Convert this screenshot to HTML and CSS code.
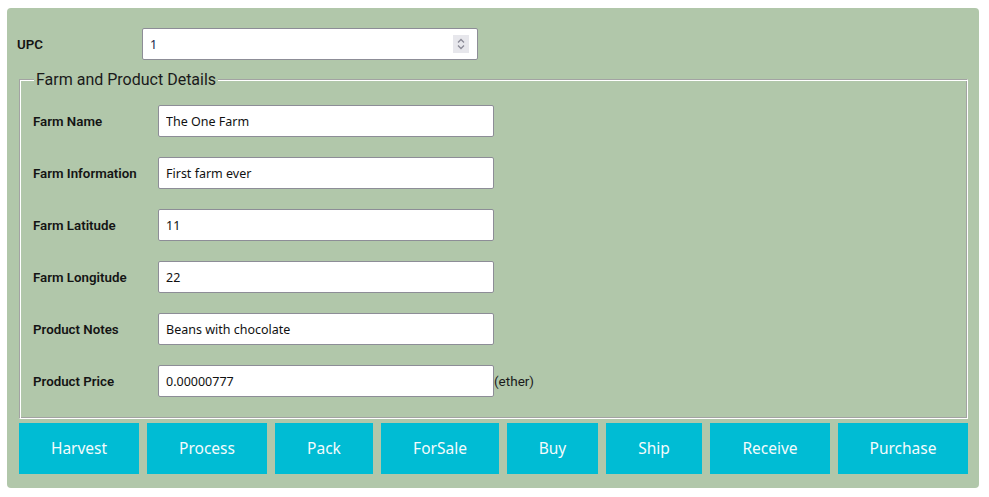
FILE: index.html
```
<!DOCTYPE html>
<html>
<head>
<meta charset="utf-8">
<link rel="stylesheet" href="styles.css">
</head>
<body>
<div class="panel">
  <div class="row upc-row">
    <label class="lbl">UPC</label>
    <div class="num-wrap">
      <input class="field upc" type="text" value="1">
      <span class="spin">
        <svg width="16" height="18" viewBox="0 0 16 18"><path d="M5 7.5 L8 4.5 L11 7.5" fill="none" stroke="#8a8a96" stroke-width="1.3"/><path d="M5 10.5 L8 13.5 L11 10.5" fill="none" stroke="#8a8a96" stroke-width="1.3"/></svg>
      </span>
    </div>
  </div>
  <fieldset class="details">
    <legend>Farm and Product Details</legend>
    <div class="row"><label class="lbl">Farm Name</label><input class="field" type="text" value="The One Farm"></div>
    <div class="row"><label class="lbl">Farm Information</label><input class="field" type="text" value="First farm ever"></div>
    <div class="row"><label class="lbl">Farm Latitude</label><input class="field" type="text" value="11"></div>
    <div class="row"><label class="lbl">Farm Longitude</label><input class="field" type="text" value="22"></div>
    <div class="row"><label class="lbl">Product Notes</label><input class="field" type="text" value="Beans with chocolate"></div>
    <div class="row"><label class="lbl">Product Price</label><input class="field" type="text" value="0.00000777"><span class="unit">(ether)</span></div>
  </fieldset>
  <div class="actions">
    <button class="btn">Harvest</button>
    <button class="btn">Process</button>
    <button class="btn">Pack</button>
    <button class="btn">ForSale</button>
    <button class="btn">Buy</button>
    <button class="btn">Ship</button>
    <button class="btn">Receive</button>
    <button class="btn">Purchase</button>
  </div>
</div>
</body>
</html>
```
FILE: styles.css
```
html, body {
  margin: 0;
  padding: 0;
  background: #ffffff;
}
body {
  font-family: Roboto, "Liberation Sans", sans-serif;
}
.panel {
  margin: 8px 10px 0 7px;
  width: 972px;
  height: 480px;
  box-sizing: border-box;
  background: #b1c7aa;
  border-radius: 4px;
  padding: 20px 11px 0 10px;
}
.row {
  display: flex;
  align-items: center;
  height: 32px;
  margin-bottom: 20px;
}
.row:last-child {
  margin-bottom: 0;
}
.upc-row {
  margin-bottom: 0;
}
.lbl {
  width: 125px;
  flex: none;
  font-size: 13.3px;
  font-weight: 600;
  color: #141414;
}
.num-wrap {
  position: relative;
  width: 336px;
  height: 32px;
}
.field {
  box-sizing: border-box;
  width: 336px;
  height: 32px;
  margin: 0;
  border: 1px solid #8d8d97;
  border-radius: 2px;
  background: #ffffff;
  padding: 0 7px;
  font-family: "Noto Sans", "Open Sans", sans-serif;
  font-size: 12.5px;
  color: #111111;
  outline: none;
}
.upc {
  color: #1b1f4a;
}
.spin {
  position: absolute;
  right: 9px;
  top: 7px;
  width: 16px;
  height: 18px;
  background: #e7e7ec;
  display: flex;
}
.details {
  margin: 10px 0 0 2px;
  padding: 16px 10px 21px 13px;
  border: 1px solid;
  border-color: #a3a3a3 #ffffff #ffffff #a3a3a3;
  box-shadow: inset 1px 1px 0 #ffffff, inset -1px -1px 0 #a3a3a3;
}
.details legend {
  font-size: 16px;
  color: #1a1a1a;
  padding: 0 2px;
  margin-left: 1px;
  background: #b1c7aa;
}
.unit {
  font-size: 13.5px;
  color: #1a1a1a;
}
.actions {
  display: grid;
  grid-template-columns: 120fr 120fr 98fr 118fr 91fr 96fr 120fr 130fr;
  gap: 8px;
  margin-top: 4px;
  margin-left: 2px;
}
.btn {
  height: 51px;
  border: none;
  border-radius: 0;
  background: #00bcd4;
  color: #f4fbfc;
  font-family: "Noto Sans", "Open Sans", sans-serif;
  font-size: 15.5px;
  padding: 0 0 2px 0;
  margin: 0;
}
```
